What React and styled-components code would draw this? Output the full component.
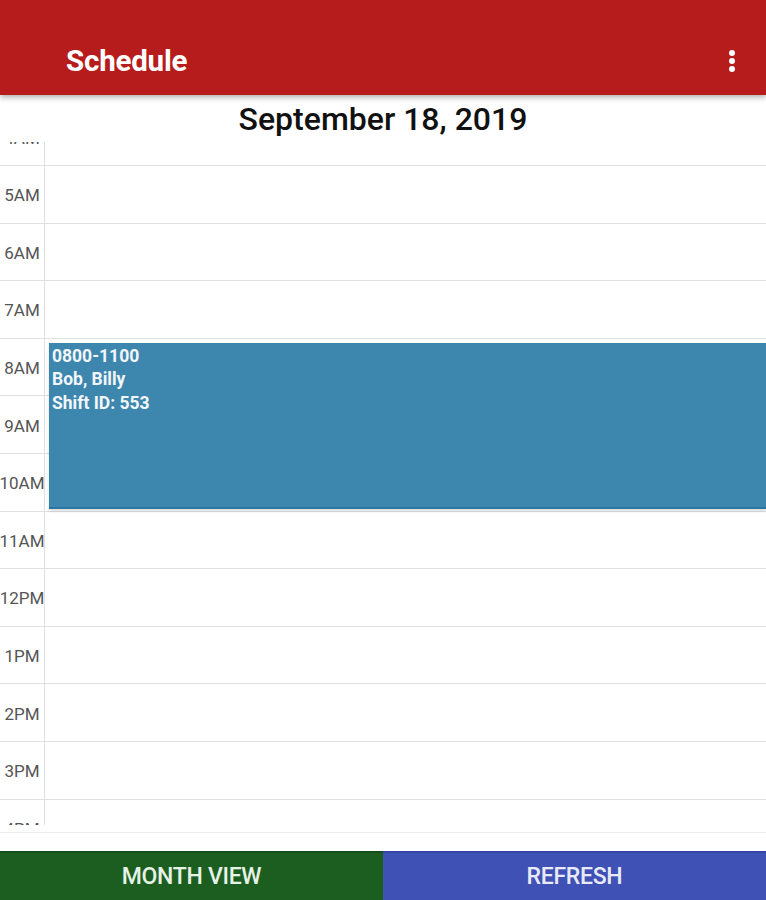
import React, { useLayoutEffect, useRef } from "react";
import styled, { createGlobalStyle } from "styled-components";

const ROW_H = 57.6;

const hours = Array.from({ length: 24 }, (_, i) => {
  const h = i % 12 === 0 ? 12 : i % 12;
  return `${h}${i < 12 ? "AM" : "PM"}`;
});

const shifts = [
  { start: 8, end: 11, lines: ["0800-1100", "Bob, Billy", "Shift ID: 553"] },
];

const GlobalStyle = createGlobalStyle`
  html, body {
    margin: 0;
    padding: 0;
    background: #fff;
    font-family: Roboto, "Noto Sans", "Liberation Sans", sans-serif;
  }
`;

const Page = styled.div`
  display: flex;
  flex-direction: column;
  height: 900px;
  width: 766px;
  overflow: hidden;
  background: #fff;
`;

const AppBar = styled.header`
  position: relative;
  z-index: 2;
  box-sizing: border-box;
  height: 95px;
  padding: 27px 20px 0 66px;
  display: flex;
  align-items: center;
  justify-content: space-between;
  background: #b71c1c;
  box-shadow: 0 2px 6px rgba(0, 0, 0, 0.35);
  flex-shrink: 0;
`;

const Title = styled.h1`
  margin: 0;
  color: #fff;
  font-size: 29.5px;
  font-weight: 700;
  letter-spacing: -0.2px;
`;

const MoreButton = styled.button`
  border: 0;
  background: none;
  padding: 0;
  width: 28px;
  height: 32px;
  display: grid;
  place-items: center;
  svg {
    display: block;
  }
`;

const DateHeading = styled.h2`
  margin: 0;
  height: 47px;
  display: flex;
  align-items: center;
  justify-content: center;
  font-size: 32px;
  font-weight: 500;
  color: #111;
  flex-shrink: 0;
`;

const Timeline = styled.div`
  height: 683px;
  flex-shrink: 0;
  overflow-y: scroll;
  scrollbar-width: none;
  &::-webkit-scrollbar {
    display: none;
  }
`;

const Grid = styled.div`
  position: relative;
`;

const HourRow = styled.div`
  display: flex;
  box-sizing: border-box;
  height: ${ROW_H}px;
  border-bottom: 1px solid #e0e0e0;
`;

const TimeLabel = styled.div`
  width: 45px;
  flex-shrink: 0;
  display: flex;
  align-items: center;
  justify-content: center;
  padding-top: 2px;
  box-sizing: border-box;
  overflow: hidden;
  white-space: nowrap;
  border-right: 1px solid #e0e0e0;
  font-size: 17px;
  color: #555;
`;

const Slot = styled.div`
  flex: 1;
`;

const ShiftCard = styled.div`
  position: absolute;
  left: 49px;
  right: 0;
  box-sizing: border-box;
  padding: 2px 3px;
  background: #3d87ae;
  border-bottom: 2px solid #2a76a2;
  box-shadow: 0 2px 3px rgba(0, 0, 0, 0.15);
  color: #f2f6f9;
  font-size: 17.5px;
  font-weight: 700;
  line-height: 23.5px;
`;

const Spacer = styled.div`
  flex: 1;
  display: flex;
  flex-direction: column;
  justify-content: flex-start;
  padding-top: 7px;
  &::before {
    content: "";
    height: 1px;
    background: #ededed;
  }
`;

const ButtonBar = styled.div`
  display: grid;
  grid-template-columns: 383px 1fr;
  height: 49px;
  flex-shrink: 0;
`;

const BarButton = styled.button`
  border: 0;
  margin: 0;
  font-family: inherit;
  font-size: 23px;
  font-weight: 500;
  letter-spacing: -0.3px;
  background: ${({ $bg }) => $bg};
  color: ${({ $fg }) => $fg};
  border-top: 2px solid ${({ $edge }) => $edge};
`;

const MoreIcon = () => (
  <svg width="10" height="26" viewBox="0 0 10 26">
    <circle cx="5" cy="5" r="3" fill="#fff" />
    <circle cx="5" cy="13" r="3" fill="#fff" />
    <circle cx="5" cy="21" r="3" fill="#fff" />
  </svg>
);

const App = () => {
  const scrollRef = useRef(null);

  useLayoutEffect(() => {
    // start the day view scrolled so the 5AM line sits just under the heading
    if (scrollRef.current) scrollRef.current.scrollTop = 5 * ROW_H - 24;
  }, []);

  return (
    <Page>
      <GlobalStyle />
      <AppBar>
        <Title>Schedule</Title>
        <MoreButton aria-label="More options">
          <MoreIcon />
        </MoreButton>
      </AppBar>

      <DateHeading>September 18, 2019</DateHeading>

      <Timeline ref={scrollRef}>
        <Grid>
          {hours.map(h => (
            <HourRow key={h}>
              <TimeLabel>{h}</TimeLabel>
              <Slot />
            </HourRow>
          ))}
          {shifts.map(s => (
            <ShiftCard
              key={s.lines[2]}
              style={{
                top: s.start * ROW_H + 4,
                height: (s.end - s.start) * ROW_H - 6.5,
              }}
            >
              {s.lines.map(l => (
                <div key={l}>{l}</div>
              ))}
            </ShiftCard>
          ))}
        </Grid>
      </Timeline>

      <Spacer />

      <ButtonBar>
        <BarButton $bg="#1b5e20" $fg="#e6f2e6" $edge="#164f1a">
          MONTH VIEW
        </BarButton>
        <BarButton $bg="#3f51b5" $fg="#e8eaf8" $edge="#3546a8">
          REFRESH
        </BarButton>
      </ButtonBar>
    </Page>
  );
};

export default App;
